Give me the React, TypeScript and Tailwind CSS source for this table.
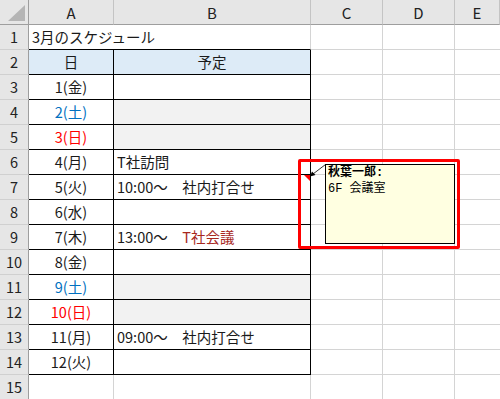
type Row = {
  n: number;
  a?: string;
  aColor?: string;
  b?: string;
  bColor?: string;
  shade?: boolean;
};

const cols = ["A", "B", "C", "D", "E"];

// 予定表の中身 (2〜14行目)
const rows: Row[] = [
  { n: 2, a: "日", b: "予定" },
  { n: 3, a: "1(金)" },
  { n: 4, a: "2(土)", aColor: "text-[#0070c0]", shade: true },
  { n: 5, a: "3(日)", aColor: "text-[#ff0000]", shade: true },
  { n: 6, a: "4(月)", b: "T社訪問" },
  { n: 7, a: "5(火)", b: "10:00～\u3000社内打合せ" },
  { n: 8, a: "6(水)" },
  { n: 9, a: "7(木)", b: "13:00～\u3000", bColor: "T社会議" },
  { n: 10, a: "8(金)" },
  { n: 11, a: "9(土)", aColor: "text-[#0070c0]", shade: true },
  { n: 12, a: "10(日)", aColor: "text-[#ff0000]", shade: true },
  { n: 13, a: "11(月)", b: "09:00～\u3000社内打合せ" },
  { n: 14, a: "12(火)" },
];

const grid = "border-r border-b border-[#d4d4d4]";

function RowHead({ n }: { n: number }) {
  return (
    <div className="flex items-center justify-center border-r border-b border-r-[#9e9e9e] border-b-[#d0d0d0] bg-[#e6e6e6] text-[#222]">
      {n}
    </div>
  );
}

function Blanks() {
  return (
    <>
      <div className={grid} />
      <div className={grid} />
      <div className="border-b border-[#d4d4d4]" />
    </>
  );
}

export default function App() {
  return (
    <div className="relative w-[500px] h-[399px] overflow-hidden bg-white font-['Noto_Sans_CJK_JP',sans-serif] text-[14.5px] leading-none text-[#1a1a1a]">
      <div className="grid grid-cols-[29px_85px_197px_72px_72px_45px] grid-rows-[repeat(16,25px)]">
        {/* 列見出し */}
        <div className="relative border-r border-b border-[#9e9e9e] bg-[#e6e6e6]">
          <svg className="absolute left-[8px] top-[5px]" width="17" height="16" viewBox="0 0 17 16">
            <polygon points="17,0 17,16 0,16" fill="#b5b5b5" />
          </svg>
        </div>
        {cols.map((c) => (
          <div
            key={c}
            className="flex items-center justify-center border-r border-b border-r-[#c4c4c4] border-b-[#9e9e9e] bg-[#e6e6e6] text-[15px] text-[#222]"
          >
            {c}
          </div>
        ))}

        {/* 1行目: タイトル */}
        <RowHead n={1} />
        <div className="relative z-10 flex items-center border-b border-black pl-[3px] whitespace-nowrap">
          3月のスケジュール
        </div>
        <div className="border-r border-b border-r-[#d4d4d4] border-b-black" />
        <Blanks />

        {rows.map((r) => {
          const head = r.n === 2;
          return (
            <div key={r.n} className="contents">
              <RowHead n={r.n} />
              <div
                className={`flex items-center justify-center border-r border-b border-black ${head ? "bg-[#ddebf7]" : ""} ${r.aColor ?? ""}`}
              >
                {r.a}
              </div>
              <div
                className={`flex items-center whitespace-nowrap border-r border-b border-black ${head ? "justify-center bg-[#ddebf7]" : "pl-[3px]"} ${r.shade ? "bg-[#f2f2f2]" : ""} ${r.n === 7 ? "relative" : ""}`}
              >
                {r.b}
                {r.bColor && <span className="text-[#a8281e]">{r.bColor}</span>}
                {r.n === 7 && (
                  <svg className="absolute right-0 top-0" width="6" height="6" viewBox="0 0 6 6">
                    <polygon points="0,0 6,0 6,6" fill="#ff0000" />
                  </svg>
                )}
              </div>
              <Blanks />
            </div>
          );
        })}

        {/* 15行目 */}
        <RowHead n={15} />
        <div className={grid} />
        <div className={grid} />
        <Blanks />
      </div>

      {/* コメントの引き出し線 */}
      <svg className="absolute left-[306px] top-[160px]" width="24" height="22" viewBox="0 0 24 22">
        <line x1="19.5" y1="4.5" x2="7" y2="14" stroke="#333" strokeWidth="1" />
        <polygon points="4,16.5 6,11.5 9.5,15" fill="#000" />
      </svg>

      {/* コメント */}
      <div className="absolute left-[325px] top-[164px] w-[130px] h-[80px] border border-black bg-[#ffffe1] pl-[2px] font-['Liberation_Mono','Noto_Sans_CJK_JP',monospace] text-[12px] leading-[16px] text-black">
        <div className="font-bold">秋葉一郎:</div>
        <div>6F 会議室</div>
      </div>

      {/* 強調枠 */}
      <div className="absolute left-[298px] top-[159px] w-[162px] h-[90px] rounded-[2px] border-[3px] border-[#ff0000]" />
    </div>
  );
}
